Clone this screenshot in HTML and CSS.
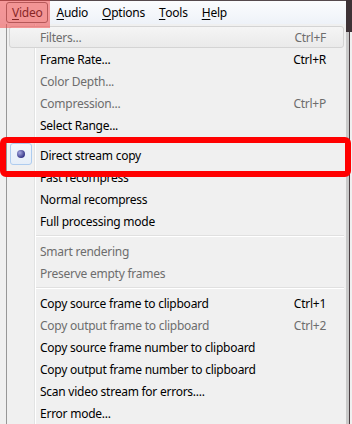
FILE: index.html
```html
<!DOCTYPE html>
<html lang="en">
<head>
    <meta charset="UTF-8">
    <title>Video Menu</title>
    <link rel="stylesheet" href="styles.css">
</head>
<body>
    <div class="window">
        <div class="menubar">
            <span class="top-item active"><u>V</u>ideo</span>
            <span class="top-item"><u>A</u>udio</span>
            <span class="top-item"><u>O</u>ptions</span>
            <span class="top-item"><u>T</u>ools</span>
            <span class="top-item"><u>H</u>elp</span>
        </div>
        <div class="frame-right"></div>

        <div class="menu">
            <div class="item disabled hover"><span>Filters...</span><span class="key">Ctrl+F</span></div>
            <div class="item"><span>Frame Rate...</span><span class="key">Ctrl+R</span></div>
            <div class="item disabled"><span>Color Depth...</span></div>
            <div class="item disabled"><span>Compression...</span><span class="key">Ctrl+P</span></div>
            <div class="item"><span>Select Range...</span></div>
            <div class="sep"></div>
            <div class="item checked"><span class="radio"><i></i></span><span>Direct stream copy</span></div>
            <div class="item"><span>Fast recompress</span></div>
            <div class="item"><span>Normal recompress</span></div>
            <div class="item"><span>Full processing mode</span></div>
            <div class="sep"></div>
            <div class="item disabled"><span>Smart rendering</span></div>
            <div class="item disabled"><span>Preserve empty frames</span></div>
            <div class="sep"></div>
            <div class="item"><span>Copy source frame to clipboard</span><span class="key">Ctrl+1</span></div>
            <div class="item disabled"><span>Copy output frame to clipboard</span><span class="key">Ctrl+2</span></div>
            <div class="item"><span>Copy source frame number to clipboard</span></div>
            <div class="item"><span>Copy output frame number to clipboard</span></div>
            <div class="item"><span>Scan video stream for errors....</span></div>
            <div class="item"><span>Error mode...</span></div>
        </div>

        <!-- annotation marks -->
        <div class="mark-menu"></div>
        <div class="mark-item"></div>
    </div>
</body>
</html>
```

FILE: styles.css
```css
body {
    margin: 0;
    background-color: #f0f0f0;
    font-family: 'Noto Sans', sans-serif;
    font-size: 12px;
    letter-spacing: -0.25px;
    color: #000;
    overflow: hidden;
}

.window {
    position: relative;
    width: 352px;
    height: 424px;
    overflow: hidden;
}

.menubar {
    display: flex;
    height: 23px;
    padding-left: 6px;
    border-top: 1px solid #55494d;
    background: linear-gradient(#fbfcfe, #eef2f8);
}

.top-item {
    display: flex;
    align-items: center;
    height: 19px;
    margin-top: 1px;
    padding: 0 5px;
    margin-right: 2px;
    border: 1px solid transparent;
    border-radius: 3px;
}

.top-item.active {
    border-color: #6f6f6f;
    background: #f4f4f4;
}

.top-item u {
    text-decoration: underline;
    text-underline-offset: 2px;
}

.frame-right {
    position: absolute;
    top: 0;
    right: 0;
    width: 6px;
    height: 424px;
    background: linear-gradient(90deg, #c9c9c9 0, #c9c9c9 3px, #4a3e42 3px, #4a3e42 4px, #f0f0f0 4px);
}

.frame-right::before {
    content: "";
    display: block;
    height: 32px;
    background: #3d3236;
}

.menu {
    width: 335px;
    margin-left: 6px;
    padding: 2px 2px 0 2px;
    border-left: 1px solid #979797;
    background:
        linear-gradient(90deg, transparent 27px, #e2e3e3 27px, #e2e3e3 28px, #ffffff 28px, #ffffff 29px, transparent 29px);
}

.item {
    display: flex;
    align-items: center;
    height: 20px;
    padding: 0 17px 0 30px;
    border: 1px solid transparent;
    border-radius: 3px;
    position: relative;
    white-space: nowrap;
}

.item .key {
    margin-left: auto;
}

.item.disabled {
    color: #6d6d6d;
}

.item.hover {
    border-color: #d4d4d4;
    background: linear-gradient(#f5f5f5, #eaeaea);
}

.sep {
    height: 0;
    margin: 3px 0 3px 27px;
    border-top: 1px solid #e0e0e0;
    border-bottom: 1px solid #ffffff;
}

.radio {
    position: absolute;
    left: 0;
    top: -2px;
    width: 20px;
    height: 20px;
    border: 1px solid #aeccef;
    border-radius: 3px;
    background: linear-gradient(#f2f6fc, #e6eef8);
    display: flex;
    align-items: center;
    justify-content: center;
}

.radio i {
    width: 8px;
    height: 8px;
    border-radius: 50%;
    background: radial-gradient(circle at 35% 35%, #a6a9e0, #39398a 70%);
}

.mark-menu {
    position: absolute;
    left: 0;
    top: 0;
    width: 50px;
    height: 28px;
    background: rgba(240, 70, 70, 0.55);
}

.mark-item {
    position: absolute;
    left: 0;
    top: 137px;
    width: 339px;
    height: 28px;
    border: 6px solid #ff0000;
    border-radius: 6px;
}
```
